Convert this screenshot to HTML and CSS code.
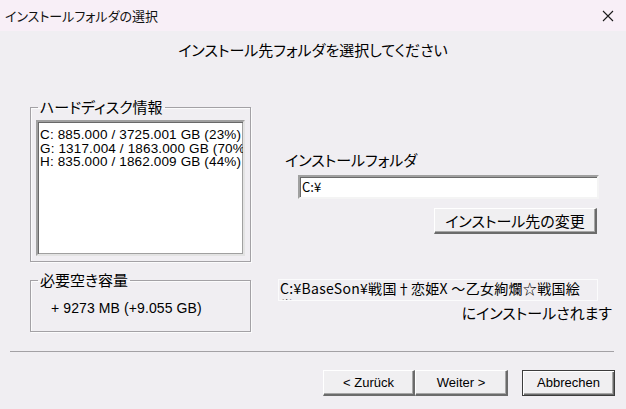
FILE: index.html
```html
<!DOCTYPE html>
<html lang="ja">
<head>
<meta charset="utf-8">
<title>インストールフォルダの選択</title>
<link rel="stylesheet" href="styles.css">
</head>
<body>
<div class="window">
  <header class="titlebar">
    <span class="title">インストールフォルダの選択</span>
    <span class="close" aria-label="閉じる">
      <svg width="12" height="12" viewBox="0 0 12 12"><path d="M1 1L11 11M11 1L1 11" stroke="#1a1a1a" stroke-width="1.1" fill="none"/></svg>
    </span>
  </header>
  <main class="dialog">
    <p class="heading">インストール先フォルダを選択してください</p>
    <div class="content">
      <div class="left">
        <fieldset class="group disk">
          <legend>ハードディスク情報</legend>
          <div class="listbox">
            <div class="item">C: 885.000 / 3725.001 GB (23%)</div>
            <div class="item">G: 1317.004 / 1863.000 GB (70%)</div>
            <div class="item">H: 835.000 / 1862.009 GB (44%)</div>
          </div>
        </fieldset>
        <fieldset class="group need">
          <legend>必要空き容量</legend>
          <p class="need-value">+ 9273 MB (+9.055 GB)</p>
        </fieldset>
      </div>
      <div class="right">
        <div class="folder-label">インストールフォルダ</div>
        <div class="edit">C:¥</div>
        <div class="change-row"><button class="btn change">インストール先の変更</button></div>
        <div class="path">C:¥BaseSon¥戦国†恋姫X ～乙女絢爛☆戦国絵<span class="keep">巻～</span></div>
        <p class="will-install">にインストールされます</p>
      </div>
    </div>
    <div class="separator"></div>
    <div class="buttons">
      <button class="btn nav">&lt; Zurück</button>
      <button class="btn nav">Weiter &gt;</button>
      <button class="btn nav cancel">Abbrechen</button>
    </div>
  </main>
</div>
</body>
</html>
```
FILE: styles.css
```css
* { box-sizing: border-box; }

html, body {
  margin: 0;
  padding: 0;
}

body {
  width: 626px;
  height: 409px;
  overflow: hidden;
  background: #f0eef2;
  color: #000;
  font-family: "Noto Sans CJK JP", "Liberation Sans", sans-serif;
  font-feature-settings: "palt";
}

.window {
  width: 626px;
  height: 409px;
  display: flex;
  flex-direction: column;
}

/* title bar */
.titlebar {
  height: 31px;
  flex: none;
  display: flex;
  align-items: center;
  justify-content: space-between;
  background: #f8eff7;
  padding: 0 12px 0 5px;
}

.title {
  font-size: 13px;
  line-height: 18px;
  color: #111;
}

.close {
  display: flex;
  width: 12px;
  height: 12px;
}

/* dialog body */
.dialog {
  flex: 1;
  display: flex;
  flex-direction: column;
}

.heading {
  margin: 9px 0 0;
  text-align: center;
  font-size: 15px;
  line-height: 20px;
}

.content {
  display: flex;
  gap: 27px;
  margin-top: 38px;
  padding-left: 30px;
}

.left {
  width: 221px;
  display: flex;
  flex-direction: column;
}

/* etched group boxes */
.group {
  margin: 0;
  min-width: 0;
  border: 1px solid #a3a1a5;
  box-shadow: inset 1px 1px 0 #fbfbfc, 1px 1px 0 #fbfbfc;
}

.group legend {
  margin-left: 2px;
  padding: 0 2px;
  font-size: 15px;
  line-height: 18px;
}

.disk {
  padding: 4px 5px 5px 5px;
}

.need {
  margin-top: 9px;
  padding: 10px 5px 14px 5px;
}

.listbox {
  height: 136px;
  background: #fff;
  border-style: solid;
  border-width: 2px;
  border-color: #a0a0a0 #e3e3e3 #e3e3e3 #a0a0a0;
  box-shadow: inset 1px 1px 0 #696969, inset -1px -1px 0 #a0a0a0;
  padding: 6px 0 0 2px;
  overflow: hidden;
}

.item {
  font-family: "Liberation Sans", sans-serif;
  font-size: 13.5px;
  line-height: 13.5px;
  white-space: nowrap;
  letter-spacing: 0.15px;
}

.need-value {
  margin: 0 0 0 15px;
  font-family: "Liberation Sans", sans-serif;
  font-size: 14px;
  line-height: 18px;
  letter-spacing: 0.1px;
}

/* right column */
.right {
  width: 336px;
  display: flex;
  flex-direction: column;
  padding-top: 53px;
}

.folder-label {
  padding-left: 7px;
  font-size: 15px;
  line-height: 18px;
}

.edit {
  margin: 6px 0 0 20px;
  width: 301px;
  height: 24px;
  background: #fff;
  border-style: solid;
  border-width: 2px;
  border-color: #a0a0a0 #f4f4f4 #f4f4f4 #a0a0a0;
  box-shadow: inset 1px 1px 0 #696969;
  padding: 0 0 0 2px;
  font-size: 13px;
  line-height: 19px;
}

.change-row {
  display: flex;
  justify-content: flex-end;
  padding-right: 17px;
  margin-top: 9px;
}

/* raised push buttons */
.btn {
  margin: 0;
  height: 26px;
  padding: 0;
  background: #f0eff1;
  color: #000;
  border-style: solid;
  border-width: 1px 2px 2px 1px;
  border-color: #fff #6b6b6b #6b6b6b #fff;
  box-shadow: inset -1px -1px 0 #a6a6a6;
  font-family: "Liberation Sans", sans-serif;
  font-size: 13px;
  line-height: 20px;
}

.change {
  width: 163px;
  font-family: "Noto Sans CJK JP", sans-serif;
  font-feature-settings: "palt";
  font-size: 15px;
}

.path {
  margin-top: 45px;
  width: 320px;
  height: 22px;
  border: 1px solid #fbfbfc;
  padding: 0 0 0 1px;
  overflow: hidden;
  font-size: 14px;
  line-height: 17px;
  letter-spacing: 0.3px;
}

.path .keep {
  white-space: nowrap;
}

.will-install {
  margin: 3px 0 0;
  padding-right: 2px;
  text-align: right;
  font-size: 15px;
  line-height: 18px;
}

.separator {
  margin: 19px 12px 0 10px;
  border-top: 1px solid #a3a1a5;
}

.buttons {
  display: flex;
  justify-content: flex-end;
  margin-top: 18px;
  padding-right: 11px;
}

.nav {
  width: 93px;
}

.nav:first-child {
  width: 92px;
}

.cancel {
  margin-left: 14px;
  border: 1px solid #3c3c3c;
  box-shadow: inset 1px 1px 0 #fff, inset -1px -1px 0 #6b6b6b, inset -2px -2px 0 #a6a6a6;
}
```
